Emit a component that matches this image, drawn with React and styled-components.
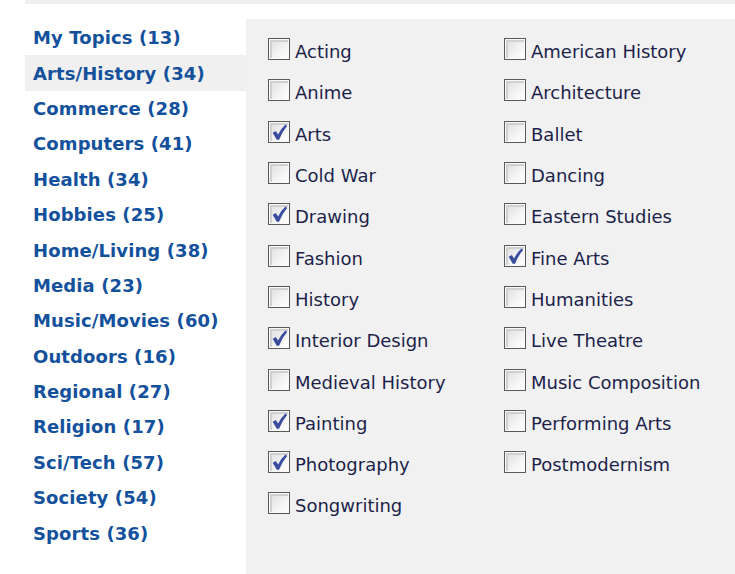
import React, { useState } from 'react'
import styled, { createGlobalStyle } from 'styled-components'

const GlobalStyle = createGlobalStyle`
  body {
    margin: 0;
    background: #ffffff;
    font-family: "DejaVu Sans", Verdana, sans-serif;
  }
`;

const Page = styled.div`
  width: 735px;
  height: 574px;
  overflow: hidden;
  display: flex;
  flex-direction: column;
`;

const TopStrip = styled.div`
  height: 4px;
  margin-left: 25px;
  background-color: #efefef;
`;

const Body = styled.div`
  flex: 1;
  display: flex;
  padding-top: 15px;
`;

const Sidebar = styled.div`
  width: 221px;
  margin: 1px 0 0 25px;
  display: flex;
  flex-direction: column;
`;

const TopicLink = styled.div`
  height: 35.4px;
  display: flex;
  align-items: center;
  padding-left: 8px;
  font-size: 18px;
  font-weight: bold;
  letter-spacing: 0.1px;
  color: #14519c;
  background-color: ${props => props.selected ? "#f0f0f0" : "transparent"};
  cursor: pointer;
`;

const Panel = styled.div`
  flex: 1;
  background-color: #f1f1f1;
  padding: 12px 0 0 22px;
  display: grid;
  grid-template-columns: 236px 1fr;
  grid-auto-rows: 41.3px;
  align-content: start;
`;

const Item = styled.label`
  display: flex;
  align-items: center;
  font-size: 18px;
  color: #1c1f4a;
  cursor: pointer;
`;

const Box = styled.span`
  width: 20px;
  height: 20px;
  border: 1px solid #5a5a5a;
  background: linear-gradient(135deg, #dcdcdc 0%, #f4f4f4 60%, #ffffff 100%);
  box-shadow: inset 0 0 0 1px #f8f8f8, inset 1px 1px 0 2px #d0d0d0;
  margin-right: 5px;
  margin-top: -5px;
  display: flex;
  align-items: center;
  justify-content: center;
  flex-shrink: 0;
`;

const topics = [
  ["My Topics", 13], ["Arts/History", 34], ["Commerce", 28], ["Computers", 41],
  ["Health", 34], ["Hobbies", 25], ["Home/Living", 38], ["Media", 23],
  ["Music/Movies", 60], ["Outdoors", 16], ["Regional", 27], ["Religion", 17],
  ["Sci/Tech", 57], ["Society", 54], ["Sports", 36],
];

const left = [
  ["Acting", false], ["Anime", false], ["Arts", true], ["Cold War", false],
  ["Drawing", true], ["Fashion", false], ["History", false], ["Interior Design", true],
  ["Medieval History", false], ["Painting", true], ["Photography", true], ["Songwriting", false],
];
const right = [
  ["American History", false], ["Architecture", false], ["Ballet", false], ["Dancing", false],
  ["Eastern Studies", false], ["Fine Arts", true], ["Humanities", false], ["Live Theatre", false],
  ["Music Composition", false], ["Performing Arts", false], ["Postmodernism", false],
];

// bold blue tick, heavier on the long stroke
function Check() {
  return (
    <svg width="17" height="18" viewBox="0 0 16 16">
      <path d="M1.6 8.6 L4.6 7 L6.6 10.4 Q9.6 4.6 13.6 1 L15.2 2.4 Q10.6 7.6 7.6 15.2 L5.4 15.2 Z" fill="#3a4c9f" />
    </svg>
  );
}

function CheckItem({ label, checked }) {
  const [on, setOn] = useState(checked);
  return (
    <Item onClick={() => setOn(!on)}>
      <Box>{on && <Check />}</Box>
      {label}
    </Item>
  );
}

export default function App() {
  const rows = [];
  for (let i = 0; i < left.length; i++) {
    rows.push(<CheckItem key={"l" + i} label={left[i][0]} checked={left[i][1]} />);
    rows.push(right[i] ? <CheckItem key={"r" + i} label={right[i][0]} checked={right[i][1]} /> : <div key={"r" + i} />);
  }
  return (
    <Page>
      <GlobalStyle />
      <TopStrip />
      <Body>
        <Sidebar>
          {topics.map(([name, n], i) => (
            <TopicLink key={name} selected={i === 1}>{name} ({n})</TopicLink>
          ))}
        </Sidebar>
        <Panel>{rows}</Panel>
      </Body>
    </Page>
  )
}
